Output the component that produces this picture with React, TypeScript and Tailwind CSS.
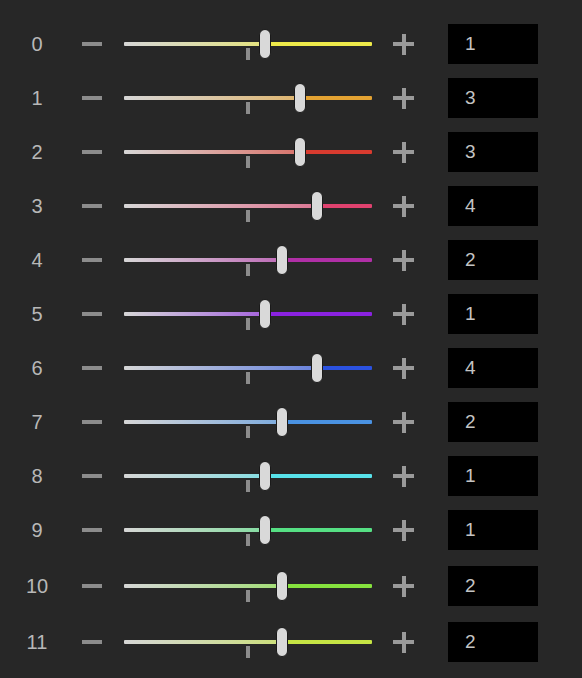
import React from "react";

const rows: { v: number; c: string }[] = [
  { v: 1, c: "#eeea4a" },
  { v: 3, c: "#e3a232" },
  { v: 3, c: "#d93b2f" },
  { v: 4, c: "#e0426f" },
  { v: 2, c: "#b02fa6" },
  { v: 1, c: "#8a22e0" },
  { v: 4, c: "#2b52e0" },
  { v: 2, c: "#4a92e2" },
  { v: 1, c: "#58e2ea" },
  { v: 1, c: "#56e084" },
  { v: 2, c: "#86e23e" },
  { v: 2, c: "#c6e444" },
];

function Slider({ v, c }: { v: number; c: string }) {
  const left = 118 + 17.5 * v;
  return (
    <div className="relative flex items-center w-[248px] h-[40px]">
      <div
        className="h-[4px] rounded-l-[1px]"
        style={{
          width: left,
          background: `linear-gradient(to right, #d6d6d6, color-mix(in srgb, ${c} 62%, #d6d6d6))`,
        }}
      />
      <div className="z-10 -mx-[1px] w-[10px] h-[28px] rounded-full bg-[#d9d9d9] border border-[#1a1a1a] box-content" />
      <div className="flex-1 h-[4px] rounded-r-[1px]" style={{ background: c }} />
      <div className="absolute left-[122px] top-[24px] w-[4px] h-[12px] bg-[#8c8c8c]" />
    </div>
  );
}

function Plus() {
  return (
    <div className="grid place-items-center w-[21px] h-[21px]">
      <div className="col-start-1 row-start-1 w-[21px] h-[4px] bg-[#9a9a9a]" />
      <div className="col-start-1 row-start-1 w-[4px] h-[21px] bg-[#9a9a9a]" />
    </div>
  );
}

export default function App() {
  return (
    <div
      className="w-[582px] h-[678px] bg-[#272727] pt-[24px] flex flex-col gap-[14px]"
      style={{ fontFamily: '"Liberation Sans", Arial, sans-serif' }}
    >
      {rows.map((r, i) => (
        <div key={i} className={`flex items-center h-[40px] ${i >= 10 ? "mt-[2px]" : ""}`}>
          <div className="w-[74px] text-center text-[20px] text-[#b8b8b8] leading-none">{i}</div>
          <div className="ml-[8px] w-[20px] h-[4px] bg-[#8c8c8c]" />
          <div className="ml-[22px]">
            <Slider v={r.v} c={r.c} />
          </div>
          <div className="ml-[21px]">
            <Plus />
          </div>
          <div className="ml-[34px] w-[90px] h-[40px] bg-black flex items-center pl-[17px] text-[19px] text-[#c4c4c4]">
            {r.v}
          </div>
        </div>
      ))}
    </div>
  );
}
